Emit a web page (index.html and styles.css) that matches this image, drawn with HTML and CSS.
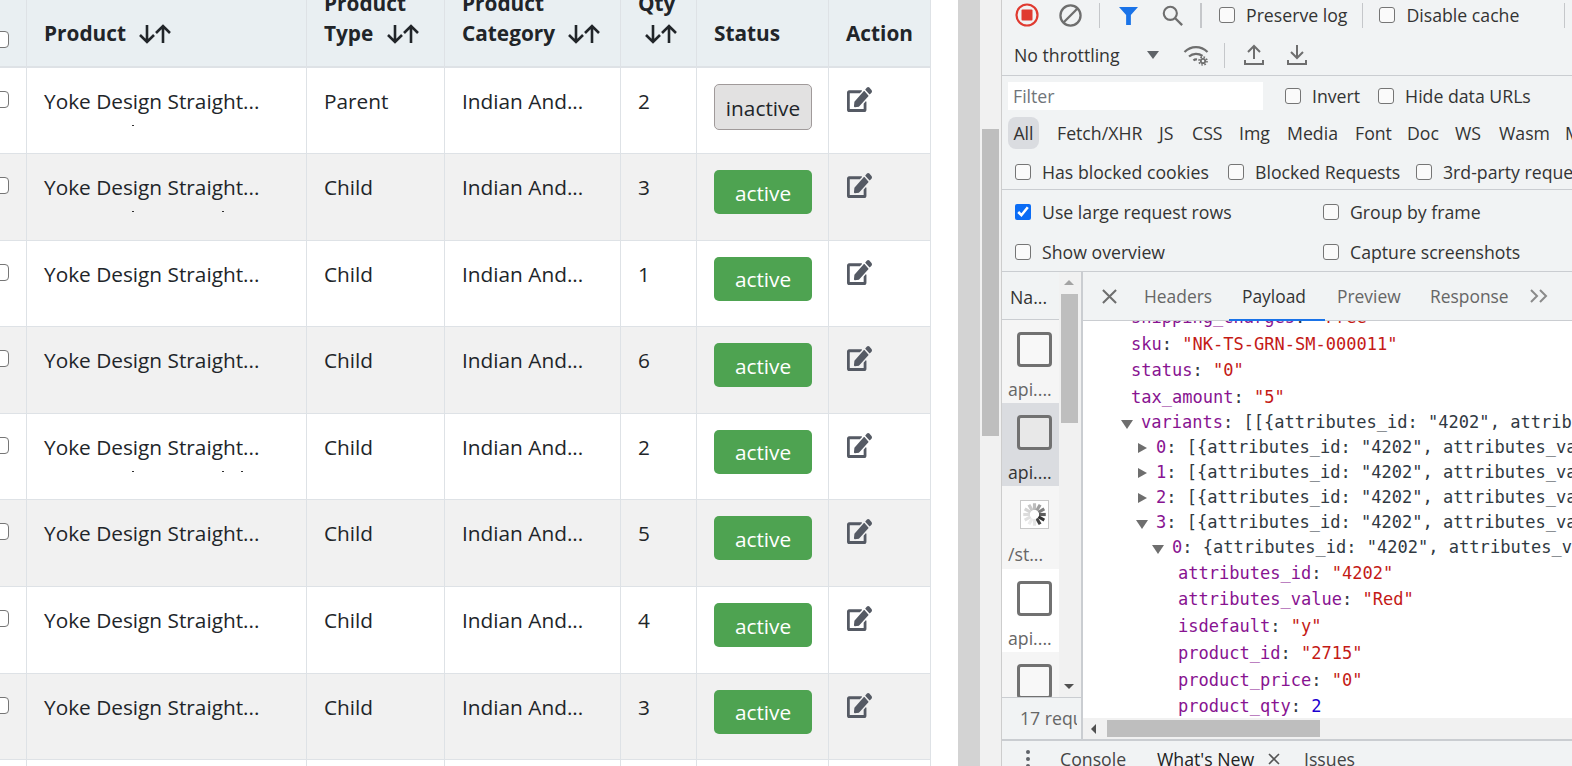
FILE: index.html
```html
<!DOCTYPE html>
<html lang="en">
	<head>
		<meta charset="UTF-8" />
		<title>Products</title>
		<link rel="stylesheet" href="styles.css">
	</head>
	<body>
		<svg class="defs" width="0" height="0">
			<symbol id="sort" viewBox="0 0 34 20">
				<path d="M9 1v17M2 11l7 7 7-7M25 19V2M18 9l7-7 7 7" fill="none" stroke="currentColor" stroke-width="2.6"/>
			</symbol>
			<symbol id="edit" viewBox="0 0 576 512" preserveAspectRatio="none">
				<path d="M402.6 83.2l90.2 90.2c3.8 3.8 3.8 10 0 13.8L274.4 405.6l-92.8 10.3c-12.4 1.4-22.9-9.1-21.5-21.5l10.3-92.8L388.8 83.2c3.8-3.8 10-3.8 13.8 0zm162-22.9l-48.8-48.8c-15.2-15.2-39.9-15.2-55.2 0l-35.4 35.4c-3.8 3.8-3.8 10 0 13.8l90.2 90.2c3.8 3.8 10 3.8 13.8 0l35.4-35.4c15.2-15.3 15.2-40 0-55.2zM384 346.2V448H64V128h229.8c3.2 0 6.2-1.3 8.5-3.5l40-40c7.6-7.6 2.2-20.5-8.5-20.5H48C21.5 64 0 85.5 0 112v352c0 26.5 21.5 48 48 48h352c26.5 0 48-21.5 48-48V306.2c0-10.7-12.9-16-20.5-8.5l-40 40c-2.2 2.3-3.5 5.3-3.5 8.5z" fill="currentColor"/>
			</symbol>
		</svg>

		<main class="page">
			<section class="table-pane">
				<table class="products">
					<colgroup>
						<col class="c-check" /><col class="c-product" /><col class="c-type" /><col class="c-cat" /><col class="c-qty" /><col class="c-status" /><col class="c-action" />
					</colgroup>
					<thead>
						<tr>
							<th><input type="checkbox" class="row-check" /></th>
							<th>Product <svg class="sort"><use href="#sort" /></svg></th>
							<th>Product<br />Type <svg class="sort"><use href="#sort" /></svg></th>
							<th>Product<br />Category <svg class="sort"><use href="#sort" /></svg></th>
							<th>Qty<br /><svg class="sort qty-sort"><use href="#sort" /></svg></th>
							<th>Status</th>
							<th>Action</th>
						</tr>
					</thead>
					<tbody>
						<tr>
							<td><input type="checkbox" class="row-check" /></td>
							<td class="name">Yoke Design Straight...<i class="speck s1"></i></td>
							<td>Parent</td>
							<td>Indian And...</td>
							<td>2</td>
							<td><button type="button" class="badge inactive">inactive</button></td>
							<td><svg class="edit"><use href="#edit" /></svg></td>
						</tr>
						<tr>
							<td><input type="checkbox" class="row-check" /></td>
							<td class="name">Yoke Design Straight...<i class="speck s1"></i><i class="speck s2"></i></td>
							<td>Child</td>
							<td>Indian And...</td>
							<td>3</td>
							<td><button type="button" class="badge">active</button></td>
							<td><svg class="edit"><use href="#edit" /></svg></td>
						</tr>
						<tr>
							<td><input type="checkbox" class="row-check" /></td>
							<td class="name">Yoke Design Straight...</td>
							<td>Child</td>
							<td>Indian And...</td>
							<td>1</td>
							<td><button type="button" class="badge">active</button></td>
							<td><svg class="edit"><use href="#edit" /></svg></td>
						</tr>
						<tr>
							<td><input type="checkbox" class="row-check" /></td>
							<td class="name">Yoke Design Straight...</td>
							<td>Child</td>
							<td>Indian And...</td>
							<td>6</td>
							<td><button type="button" class="badge">active</button></td>
							<td><svg class="edit"><use href="#edit" /></svg></td>
						</tr>
						<tr>
							<td><input type="checkbox" class="row-check" /></td>
							<td class="name">Yoke Design Straight...<i class="speck s1"></i><i class="speck s2"></i><i class="speck s3"></i></td>
							<td>Child</td>
							<td>Indian And...</td>
							<td>2</td>
							<td><button type="button" class="badge">active</button></td>
							<td><svg class="edit"><use href="#edit" /></svg></td>
						</tr>
						<tr>
							<td><input type="checkbox" class="row-check" /></td>
							<td class="name">Yoke Design Straight...</td>
							<td>Child</td>
							<td>Indian And...</td>
							<td>5</td>
							<td><button type="button" class="badge">active</button></td>
							<td><svg class="edit"><use href="#edit" /></svg></td>
						</tr>
						<tr>
							<td><input type="checkbox" class="row-check" /></td>
							<td class="name">Yoke Design Straight...</td>
							<td>Child</td>
							<td>Indian And...</td>
							<td>4</td>
							<td><button type="button" class="badge">active</button></td>
							<td><svg class="edit"><use href="#edit" /></svg></td>
						</tr>
						<tr>
							<td><input type="checkbox" class="row-check" /></td>
							<td class="name">Yoke Design Straight...</td>
							<td>Child</td>
							<td>Indian And...</td>
							<td>3</td>
							<td><button type="button" class="badge">active</button></td>
							<td><svg class="edit"><use href="#edit" /></svg></td>
						</tr>
						<tr>
							<td></td><td></td><td></td><td></td><td></td><td></td><td></td>
						</tr>
					</tbody>
				</table>
			</section>

			<div class="page-track"></div>
			<div class="page-scroll"><div class="page-thumb"></div></div>

			<section class="devtools">
				<div class="bar bar-top">
					<svg class="tool record" viewBox="0 0 24 24"><circle cx="12" cy="12" r="10.5" fill="none" stroke="#e03a30" stroke-width="2.2"/><rect x="6.5" y="6.5" width="11" height="11" rx="1" fill="#e03a30"/></svg>
					<svg class="tool clear" viewBox="0 0 24 24"><circle cx="12" cy="12" r="10.5" fill="none" stroke="#6e6e6e" stroke-width="2.4"/><path d="M5 19L19 5" stroke="#6e6e6e" stroke-width="2.4"/></svg>
					<span class="sep sep-a"></span>
					<svg class="tool funnel" viewBox="0 0 20 20"><path d="M0 1h20l-7.500 8.500V20h-5V9.500z" fill="#1a73e8"/></svg>
					<svg class="tool search" viewBox="0 0 24 24"><circle cx="9.5" cy="9.5" r="7.500" fill="none" stroke="#6e6e6e" stroke-width="2.400"/><path d="M14.5 14.5L23 23" stroke="#6e6e6e" stroke-width="2.600"/></svg>
					<span class="sep sep-b"></span>
					<label class="opt o-preserve"><input type="checkbox" />Preserve log</label>
					<span class="sep sep-c"></span>
					<label class="opt o-disable"><input type="checkbox" />Disable cache</label>
					<span class="sep sep-d"></span>
				</div>
				<div class="bar bar-throttle">
					<span class="throttle">No throttling</span>
					<span class="caret"></span>
					<svg class="tool wifi" viewBox="0 0 26 22"><path d="M1.500 8c6.500-6.500 16.500-6.500 23 0M6 12.500c4-3.500 9.500-3.500 13.500-.5M10.500 16.500c.8-.8 2.200-1.200 3.500-1" fill="none" stroke="#6e6e6e" stroke-width="2.200"/><circle cx="20" cy="17" r="2.200" fill="none" stroke="#6e6e6e" stroke-width="1.800"/><circle cx="20" cy="17" r="4" fill="none" stroke="#6e6e6e" stroke-width="1.600" stroke-dasharray="1.600 1.540"/></svg>
					<span class="sep sep-e"></span>
					<svg class="tool updown up" viewBox="0 0 20 22"><path d="M10 15V2M4 8l6-6 6 6M1 16v4h18v-4" fill="none" stroke="#6e6e6e" stroke-width="2"/></svg>
					<svg class="tool updown down" viewBox="0 0 20 22"><path d="M10 1v13M4 8l6 6 6-6M1 16v4h18v-4" fill="none" stroke="#6e6e6e" stroke-width="2"/></svg>
				</div>
				<div class="bar bar-filter">
					<input class="filter" type="text" placeholder="Filter" />
					<label class="opt o-invert"><input type="checkbox" />Invert</label>
					<label class="opt o-hide"><input type="checkbox" />Hide data URLs</label>
				</div>
				<div class="bar bar-types">
					<span class="type all">All</span>
					<span class="type t-fetch">Fetch/XHR</span>
					<span class="type t-js">JS</span>
					<span class="type t-css">CSS</span>
					<span class="type t-img">Img</span>
					<span class="type t-media">Media</span>
					<span class="type t-font">Font</span>
					<span class="type t-doc">Doc</span>
					<span class="type t-ws">WS</span>
					<span class="type t-wasm">Wasm</span>
					<span class="type t-m">Manifest</span>
				</div>
				<div class="bar bar-blocked">
					<label class="opt o-cookies"><input type="checkbox" />Has blocked cookies</label>
					<label class="opt o-blocked"><input type="checkbox" />Blocked Requests</label>
					<label class="opt o-third"><input type="checkbox" />3rd-party requests</label>
				</div>
				<div class="settings">
					<label class="opt"><input type="checkbox" checked />Use large request rows</label>
					<label class="opt"><input type="checkbox" />Group by frame</label>
					<label class="opt"><input type="checkbox" />Show overview</label>
					<label class="opt"><input type="checkbox" />Capture screenshots</label>
				</div>

				<div class="split">
					<aside class="requests">
						<div class="req-main">
							<div class="req-list">
								<div class="req-head">Na...</div>
								<div class="req stripe"><span class="doc-icon"></span><span class="req-name">api....</span></div>
								<div class="req selected"><span class="doc-icon"></span><span class="req-name">api....</span></div>
								<div class="req stripe">
									<span class="spinner">
										<svg viewBox="0 0 24 24"><g stroke-width="2.800" stroke-linecap="butt">
											<path d="M12 2v6" stroke="#bdbdbd"/><path d="M17 3.300l-3 5.200" stroke="#9e9e9e"/><path d="M20.700 7l-5.200 3" stroke="#7e7e7e"/><path d="M22 12h-6" stroke="#5e5e5e"/><path d="M20.700 17l-5.200-3" stroke="#333"/><path d="M17 20.700l-3-5.200" stroke="#444"/><path d="M12 22v-6" stroke="#e6e6e6"/><path d="M7 20.700l3-5.200" stroke="#ececec"/><path d="M3.300 17l5.200-3" stroke="#e0e0e0"/><path d="M2 12h6" stroke="#dcdcdc"/><path d="M3.300 7l5.200 3" stroke="#d4d4d4"/><path d="M7 3.300l3 5.200" stroke="#c8c8c8"/>
										</g></svg>
									</span>
									<span class="req-name spin-name">/st...</span>
								</div>
								<div class="req"><span class="doc-icon"></span><span class="req-name">api....</span></div>
								<div class="req stripe last"><span class="doc-icon"></span></div>
							</div>
							<div class="req-scroll">
								<span class="arrow-up"></span>
								<div class="req-thumb"></div>
								<span class="arrow-down"></span>
							</div>
						</div>
						<div class="req-status"><span>17 requests</span></div>
					</aside>

					<div class="details">
						<div class="tabs">
							<svg class="tab-close" viewBox="0 0 16 16"><path d="M1 1l14 14M15 1L1 15" stroke="#6e6e6e" stroke-width="2.200"/></svg>
							<span class="tab t-headers">Headers</span>
							<span class="tab current">Payload</span>
							<span class="tab t-preview">Preview</span>
							<span class="tab t-response">Response</span>
							<svg class="tab-more" viewBox="0 0 18 14"><path d="M1 1l6 6-6 6M10 1l6 6-6 6" fill="none" stroke="#8a8a8a" stroke-width="2"/></svg>
						</div>
						<div class="payload">
							<div class="ln pad-1 clipped"><b>shipping_charges</b>: <em>"Free"</em></div>
							<div class="ln pad-1"><b>sku</b>: <em>"NK-TS-GRN-SM-000011"</em></div>
							<div class="ln pad-1"><b>status</b>: <em>"0"</em></div>
							<div class="ln pad-1"><b>tax_amount</b>: <em>"5"</em></div>
							<div class="ln node pad-2 open"><b>variants</b>: [[{attributes_id: "4202", attributes_value: "Red", isdefault: "y"</div>
							<div class="ln node pad-3"><b>0</b>: [{attributes_id: "4202", attributes_value: "Red", isdefault</div>
							<div class="ln node pad-3"><b>1</b>: [{attributes_id: "4202", attributes_value: "Red", isdefault</div>
							<div class="ln node pad-3"><b>2</b>: [{attributes_id: "4202", attributes_value: "Red", isdefault</div>
							<div class="ln node pad-3 open"><b>3</b>: [{attributes_id: "4202", attributes_value: "Red", isdefault</div>
							<div class="ln node pad-4 open"><b>0</b>: {attributes_id: "4202", attributes_value: "Red", isdefault</div>
							<div class="ln pad-5"><b>attributes_id</b>: <em>"4202"</em></div>
							<div class="ln pad-5"><b>attributes_value</b>: <em>"Red"</em></div>
							<div class="ln pad-5"><b>isdefault</b>: <em>"y"</em></div>
							<div class="ln pad-5"><b>product_id</b>: <em>"2715"</em></div>
							<div class="ln pad-5"><b>product_price</b>: <em>"0"</em></div>
							<div class="ln pad-5"><b>product_qty</b>: <u>2</u></div>
						</div>
						<div class="hscroll">
							<span class="arrow-left"></span>
							<div class="hthumb"></div>
						</div>
					</div>
				</div>

				<div class="drawer">
					<span class="dots"><i></i><i></i><i></i></span>
					<span class="d-tab d-console">Console</span>
					<span class="d-tab d-new">What's New</span>
					<svg class="d-close" viewBox="0 0 12 12"><path d="M1 1l10 10M11 1L1 11" stroke="#555" stroke-width="1.600"/></svg>
					<span class="d-tab d-issues">Issues</span>
				</div>
			</section>
		</main>
	</body>
</html>
```

FILE: styles.css
```css
html,
body {
	margin: 0;
	height: 100%;
	overflow: hidden;
	background: #fff;
}
body {
	font-family: 'Open Sans', 'Noto Sans', sans-serif;
	color: #212529;
}
.defs {
	display: none;
}
.page {
	display: flex;
	height: 766px;
}

/* table side */
.table-pane {
	flex: 0 0 958px;
	overflow: hidden;
}
.products {
	border-collapse: collapse;
	table-layout: fixed;
	width: 940px;
	margin: -13px 0 0 -10px;
	font-size: 20.8px;
	line-height: 30px;
}
.c-check { width: 36px; }
.c-product { width: 280px; }
.c-type { width: 138px; }
.c-cat { width: 176px; }
.c-qty { width: 76px; }
.c-status { width: 132px; }
.c-action { width: 102px; }
.products th,
.products td {
	border: 1px solid #dee2e6;
	padding: 18px 17px 17px;
	text-align: left;
	vertical-align: top;
}
.products th {
	background: #e9eff2;
	font-weight: 700;
	vertical-align: bottom;
	padding: 0 17px 18px;
	border-bottom-width: 2px;
	height: 78px;
	box-sizing: border-box;
}
.products th:first-child,
.products td:first-child {
	padding-left: 1px;
	padding-right: 0;
}
.products tbody tr {
	height: 86.6px;
}
.products tbody tr:nth-child(even) td {
	background: #f1f1f1;
}
.name {
	position: relative;
}
.row-check {
	appearance: none;
	display: block;
	width: 17px;
	height: 17px;
	margin: 6px 0 0;
	border: 1px solid #767676;
	border-radius: 4px;
	background: #fff;
}
.products td .row-check {
	margin-top: 5px;
}
.sort {
	width: 34px;
	height: 20px;
	margin-left: 7px;
	vertical-align: -3px;
}
.qty-sort {
	margin-left: 6px;
}
.speck {
	position: absolute;
	top: 57px;
	left: 105px;
	width: 2px;
	height: 1px;
	background: #333;
}
.s2 { left: 195px; }
.s3 { left: 214px; }
.badge {
	display: block;
	box-sizing: border-box;
	width: 98px;
	height: 44px;
	margin-top: -2px;
	padding: 1px 0 0;
	border: 0;
	border-radius: 5px;
	background: #4ea351;
	color: #fff;
	font: inherit;
}
.inactive {
	height: 46px;
	border: 1px solid #a09a9a;
	background: #e2e1e1;
	color: #212529;
}
.edit {
	display: block;
	width: 25px;
	height: 25px;
	margin: 1px 0 0 1px;
	color: #555a64;
}

/* page scrollbars */
.page-track {
	flex: 0 0 22px;
	background: #d3d3d3;
}
.page-scroll {
	flex: 0 0 21px;
	background: #f1f1f1;
}
.page-thumb {
	width: 17px;
	height: 307px;
	margin: 129px 0 0 2px;
	background: #bebebe;
}

/* devtools */
.devtools {
	flex: 1;
	min-width: 0;
	overflow: hidden;
	background: #f1f3f4;
	border-left: 1px solid #cdcdcd;
	font-size: 17.7px;
	color: #333;
	white-space: nowrap;
}
.bar {
	display: flex;
	align-items: center;
	overflow: hidden;
}
.bar-top { height: 30px; padding: 0 0 7px 13px; }
.bar-throttle { height: 36px; padding: 0 0 2px 12px; border-bottom: 1px solid #cacdd1; }
.bar-filter { height: 39px; padding-left: 6px; }
.bar-types { height: 36px; padding-left: 6px; }
.bar-blocked { height: 35px; padding: 3px 0 0 13px; border-bottom: 1px solid #cacdd1; }
.tool { flex: none; }
.record { width: 24px; height: 24px; }
.clear { width: 23px; height: 23px; margin-left: 20px; }
.funnel { width: 19px; height: 19px; margin-left: 19px; }
.search { width: 21px; height: 21px; margin-left: 24px; }
.sep {
	flex: none;
	width: 1px;
	height: 25px;
	background: #c5c7ca;
}
.sep-a { margin-left: 17px; }
.sep-b { width: 2px; margin-left: 17px; }
.sep-c { margin-left: 15px; }
.sep-d { margin-left: 45px; }
.sep-e { margin-left: 15px; }
.opt {
	display: flex;
	align-items: center;
	flex: none;
}
.opt input {
	flex: none;
	width: 16px;
	height: 16px;
	margin: 0 11px 0 0;
	appearance: none;
	border: 1.5px solid #757575;
	border-radius: 3px;
	background: #fafafa;
}
.opt input:checked {
	appearance: auto;
	accent-color: #0b6cf5;
}
.o-preserve { margin-left: 17px; }
.o-disable { margin-left: 16px; }
.throttle { width: 107px; }
.caret {
	width: 0;
	height: 0;
	margin-left: 26px;
	border: 6px solid transparent;
	border-top: 8px solid #5f6368;
	border-bottom: 0;
}
.wifi { width: 26px; height: 22px; margin-left: 24px; }
.updown { width: 20px; height: 22px; }
.up { margin-left: 19px; }
.down { margin-left: 23px; }
.filter {
	flex: none;
	width: 255px;
	height: 28px;
	box-sizing: border-box;
	padding: 0 5px;
	border: 0;
	background: #fff;
	font: inherit;
}
.filter::placeholder { color: #70757a; }
.o-invert { margin-left: 22px; }
.o-hide { margin-left: 18px; }
.type {
	flex: none;
	display: block;
}
.all {
	width: 31px;
	height: 32px;
	line-height: 32px;
	text-align: center;
	border-radius: 8px;
	background: #dadce0;
}
.t-fetch { margin-left: 18px; width: 86px; }
.t-js { margin-left: 16px; width: 16px; }
.t-css { margin-left: 17px; width: 31px; }
.t-img { margin-left: 16px; width: 31px; }
.t-media { margin-left: 17px; width: 50px; }
.t-font { margin-left: 18px; width: 35px; }
.t-doc { margin-left: 17px; width: 32px; }
.t-ws { margin-left: 16px; width: 27px; }
.t-wasm { margin-left: 17px; width: 48px; }
.t-m { margin-left: 18px; }
.o-cookies { width: 213px; }
.o-blocked { width: 188px; }
.settings {
	display: grid;
	grid-template-columns: 308px 1fr;
	grid-auto-rows: 40px;
	align-items: center;
	height: 79px;
	padding: 2px 0 0 13px;
	border-bottom: 1px solid #cacdd1;
}

/* requests + details */
.split {
	display: flex;
	height: 467px;
}
.requests {
	flex: 0 0 79px;
	display: flex;
	flex-direction: column;
	border-right: 2px solid #cacdd1;
}
.req-main {
	flex: 1;
	display: flex;
	min-height: 0;
}
.req-list {
	flex: 0 0 57px;
	overflow: hidden;
}
.req-head {
	height: 48px;
	line-height: 50px;
	padding-left: 8px;
	box-sizing: border-box;
	border-bottom: 1px solid #cacdd1;
}
.req {
	height: 83px;
	display: flex;
	flex-direction: column;
	align-items: center;
	background: #fff;
}
.stripe { background: #f5f5f5; }
.selected { background: #dadce0; }
.last { height: 45px; overflow: hidden; }
.doc-icon {
	flex: none;
	box-sizing: border-box;
	width: 35px;
	height: 35px;
	margin-top: 12px;
	margin-left: 8px;
	border: 3.5px solid #717171;
	border-radius: 4px;
	background: #fff;
}
.selected .doc-icon { background: #e8e8e8; }
.stripe .doc-icon { background: #f8f8f8; }
.spinner {
	flex: none;
	box-sizing: border-box;
	width: 29px;
	height: 29px;
	margin-top: 14px;
	margin-left: 8px;
	border: 1px solid #c8c8c8;
	background: #fff;
}
.spinner svg { display: block; }
.req-name {
	align-self: flex-start;
	padding-left: 6px;
	margin-top: 10px;
	line-height: 24px;
	color: #666;
}
.spin-name { margin-top: 13px; }
.selected .req-name { color: #333; }
.req-scroll {
	flex: 1;
	position: relative;
	background: #f1f1f1;
}
.req-thumb {
	width: 17px;
	height: 129px;
	margin: 22px 0 0 2px;
	background: #bebebe;
}
.arrow-up {
	position: absolute;
	top: 8px;
	left: 5px;
	border: 5px solid transparent;
	border-top: 0;
	border-bottom: 5px solid #a3a3a3;
}
.arrow-down {
	position: absolute;
	bottom: 8px;
	left: 5px;
	border: 5px solid transparent;
	border-bottom: 0;
	border-top: 5px solid #505050;
}
.req-status {
	flex: 0 0 42px;
	box-sizing: border-box;
	padding-left: 18px;
	line-height: 40px;
	border-top: 1px solid #cacdd1;
	color: #666;
	overflow: hidden;
}
.req-status span {
	display: block;
	width: 57px;
	overflow: hidden;
}
.details {
	flex: 1;
	min-width: 0;
	display: flex;
	flex-direction: column;
}
.tabs {
	flex: 0 0 49px;
	display: flex;
	align-items: center;
	box-sizing: border-box;
	position: relative;
	border-bottom: 1px solid #cacdd1;
	color: #666;
	font-size: 17.4px;
}
.tab-close { flex: none; width: 15px; height: 15px; margin-left: 19px; }
.tab { flex: none; }
.t-headers { margin-left: 27px; width: 68px; }
.current {
	margin-left: 30px;
	width: 64px;
	color: #333;
}
.current::after {
	content: '';
	position: absolute;
	left: 146px;
	bottom: -1px;
	width: 96px;
	height: 2px;
	background: #1a73e8;
}
.t-preview { margin-left: 31px; width: 62px; }
.t-response { margin-left: 31px; width: 78px; }
.tab-more { flex: none; width: 18px; height: 14px; margin-left: 22px; }
.payload {
	flex: 1;
	min-height: 0;
	overflow: hidden;
	background: #fff;
	font: 17.05px/25px 'DejaVu Sans Mono', monospace;
	color: #303942;
}
.ln { height: 26.7px; line-height: 26.700px; }
.clipped { margin-top: -17px; }
.node { height: 25px; line-height: 25px; position: relative; }
.ln b { font-weight: 400; color: #881391; }
.ln em { font-style: normal; color: #c41a16; }
.ln u { text-decoration: none; color: #1c00cf; }
.pad-1 { padding-left: 48px; }
.pad-2 { padding-left: 58px; margin-top: -1px; }
.pad-3 { padding-left: 73px; }
.pad-4 { padding-left: 89px; }
.pad-5 { padding-left: 95px; }
.node::before {
	content: '';
	position: absolute;
	top: 8px;
	margin-left: -18px;
	border: 5.5px solid transparent;
	border-left: 9px solid #6e6e6e;
	border-right: 0;
}
.node.open::before {
	top: 10px;
	margin-left: -20px;
	border: 6px solid transparent;
	border-top: 9px solid #6e6e6e;
	border-bottom: 0;
}
.hscroll {
	flex: 0 0 21px;
	display: flex;
	align-items: center;
	background: #f1f1f1;
}
.arrow-left {
	flex: none;
	margin-left: 8px;
	border: 5px solid transparent;
	border-left: 0;
	border-right: 5px solid #505050;
}
.hthumb {
	width: 213px;
	height: 17px;
	margin-left: 11px;
	background: #bebebe;
}

/* bottom drawer */
.drawer {
	height: 30px;
	display: flex;
	align-items: center;
	border-top: 2px solid #cacdd1;
	color: #444;
	padding-top: 8px;
	box-sizing: border-box;
}
.dots {
	flex: none;
	display: flex;
	flex-direction: column;
	gap: 3px;
	margin-left: 24px;
}
.dots i {
	width: 4px;
	height: 4px;
	border-radius: 50%;
	background: #5f6368;
}
.d-tab { flex: none; }
.d-console { margin-left: 30px; width: 66px; }
.d-new { margin-left: 31px; width: 96px; color: #222; }
.d-close { flex: none; width: 12px; height: 12px; margin-left: 15px; }
.d-issues { margin-left: 24px; }
```
